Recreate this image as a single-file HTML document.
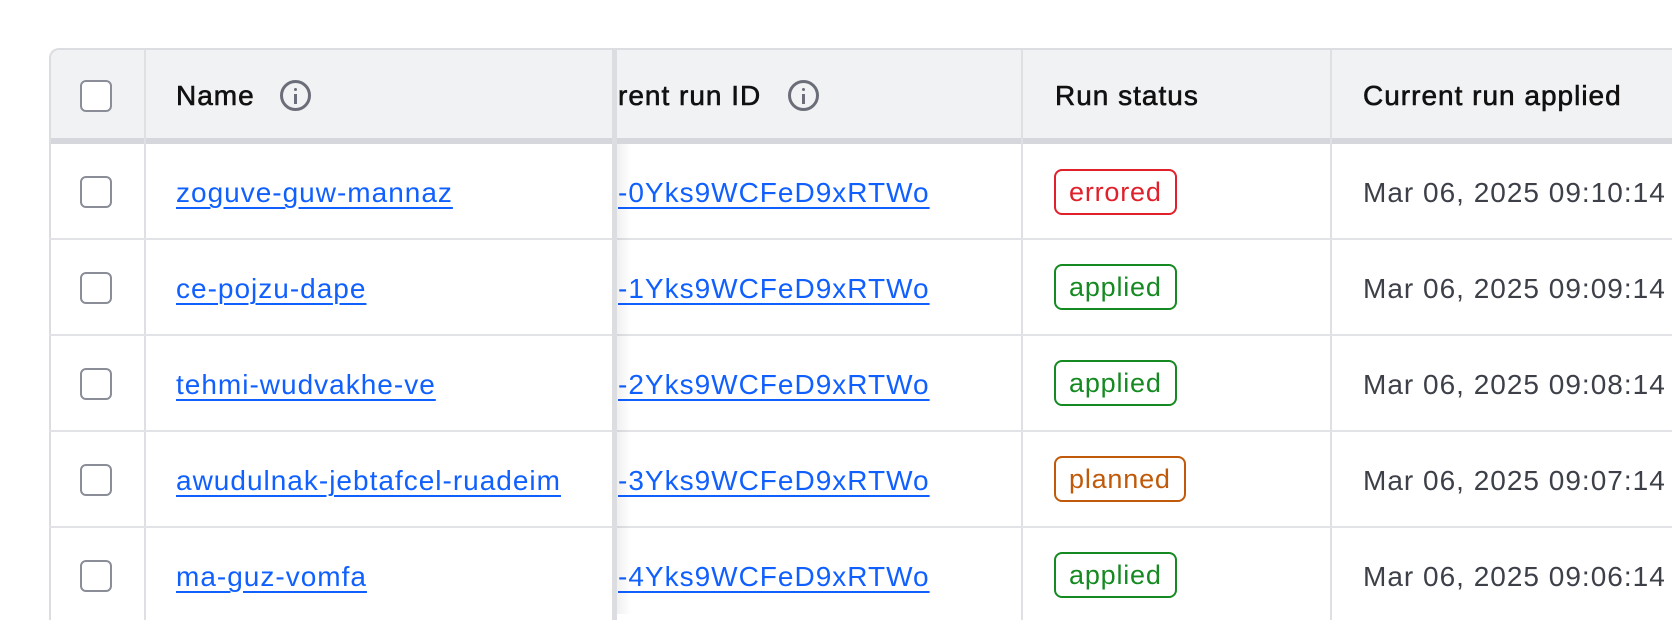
<!DOCTYPE html>
<html><head><meta charset="utf-8"><style>
*{box-sizing:border-box;margin:0;padding:0}
body{width:1672px;height:612px;overflow:hidden;background:#fff;font-family:"Liberation Sans",sans-serif;position:relative}
.a{position:absolute;white-space:nowrap}
.hd{left:49px;top:48px;width:1700px;height:90px;background:#f1f2f4;border-top:2px solid #dcdde1;border-left:2px solid #dcdde1;border-top-left-radius:10px}
.hb{left:49px;top:138px;width:1700px;height:6px;background:#d6d7dc}
.vl{width:2px;background:#dfe0e4}
.hl{height:2px;background:#e2e3e7;left:49px;width:1700px}
.cb{width:32px;height:32px;border:2px solid #8b8e98;border-radius:6px;background:#fff;left:80px}
.t{font-size:28px;letter-spacing:1px;line-height:40px}
.ht{color:#111;-webkit-text-stroke:0.6px #111;top:76px}
.lk{color:#1060ff;text-decoration:underline;text-decoration-thickness:2px;text-underline-offset:5px}
.bd{height:46px;border:2px solid;border-radius:8px;font-size:27px;letter-spacing:0.8px;line-height:42px;padding:0 13px;left:1054px}
.dt{color:#3d4048;left:1363px}
.info{width:31px;height:31px;border:3px solid #6b6e78;border-radius:50%;top:80px}
.info:before{content:"";position:absolute;left:11px;top:5px;width:3px;height:3px;background:#6b6e78;border-radius:2px}
.info:after{content:"";position:absolute;left:11px;top:11px;width:3px;height:10px;background:#6b6e78}
</style></head><body>
<div class="a hd"></div>
<div class="a hb"></div>
<div class="a vl" style="left:49px;top:60px;height:560px;background:#dcdde1"></div>
<div class="a vl" style="left:144px;top:50px;height:570px"></div>
<div class="a vl" style="left:1021px;top:50px;height:570px"></div>
<div class="a vl" style="left:1330px;top:50px;height:570px"></div>
<div class="a hl" style="top:238px"></div>
<div class="a hl" style="top:334px"></div>
<div class="a hl" style="top:430px"></div>
<div class="a hl" style="top:526px"></div>

<!-- header -->
<div class="a cb" style="top:80px"></div>
<div class="a t ht" style="left:176px">Name</div>
<div class="a info" style="left:280px"></div>
<div class="a t ht" style="left:618px">rent run ID</div>
<div class="a info" style="left:788px"></div>
<div class="a t ht" style="left:1055px">Run status</div>
<div class="a t ht" style="left:1363px">Current run applied</div>

<!-- rows -->
<div class="a cb" style="top:176px"></div>
<div class="a t lk" style="left:176px;top:173px">zoguve-guw-mannaz</div>
<div class="a t lk" style="left:618px;top:173px">-0Yks9WCFeD9xRTWo</div>
<div class="a bd" style="top:169px;color:#e0202a;border-color:#e0202a">errored</div>
<div class="a t dt" style="top:173px">Mar 06, 2025 09:10:14 am</div>

<div class="a cb" style="top:272px"></div>
<div class="a t lk" style="left:176px;top:269px">ce-pojzu-dape</div>
<div class="a t lk" style="left:618px;top:269px">-1Yks9WCFeD9xRTWo</div>
<div class="a bd" style="top:264px;color:#168a22;border-color:#168a22">applied</div>
<div class="a t dt" style="top:269px">Mar 06, 2025 09:09:14 am</div>

<div class="a cb" style="top:368px"></div>
<div class="a t lk" style="left:176px;top:365px">tehmi-wudvakhe-ve</div>
<div class="a t lk" style="left:618px;top:365px">-2Yks9WCFeD9xRTWo</div>
<div class="a bd" style="top:360px;color:#168a22;border-color:#168a22">applied</div>
<div class="a t dt" style="top:365px">Mar 06, 2025 09:08:14 am</div>

<div class="a cb" style="top:464px"></div>
<div class="a t lk" style="left:176px;top:461px">awudulnak-jebtafcel-ruadeim</div>
<div class="a t lk" style="left:618px;top:461px">-3Yks9WCFeD9xRTWo</div>
<div class="a bd" style="top:456px;color:#c05a0a;border-color:#c05a0a">planned</div>
<div class="a t dt" style="top:461px">Mar 06, 2025 09:07:14 am</div>

<div class="a cb" style="top:560px"></div>
<div class="a t lk" style="left:176px;top:557px">ma-guz-vomfa</div>
<div class="a t lk" style="left:618px;top:557px">-4Yks9WCFeD9xRTWo</div>
<div class="a bd" style="top:552px;color:#168a22;border-color:#168a22">applied</div>
<div class="a t dt" style="top:557px">Mar 06, 2025 09:06:14 am</div>

<!-- sticky column edge + shadow -->
<div class="a" style="left:612px;top:50px;width:5px;height:570px;background:#dcdde1"></div>
<div class="a" style="left:617px;top:144px;width:14px;height:470px;background:linear-gradient(90deg,rgba(0,0,0,0.06),rgba(0,0,0,0))"></div>
</body></html>
